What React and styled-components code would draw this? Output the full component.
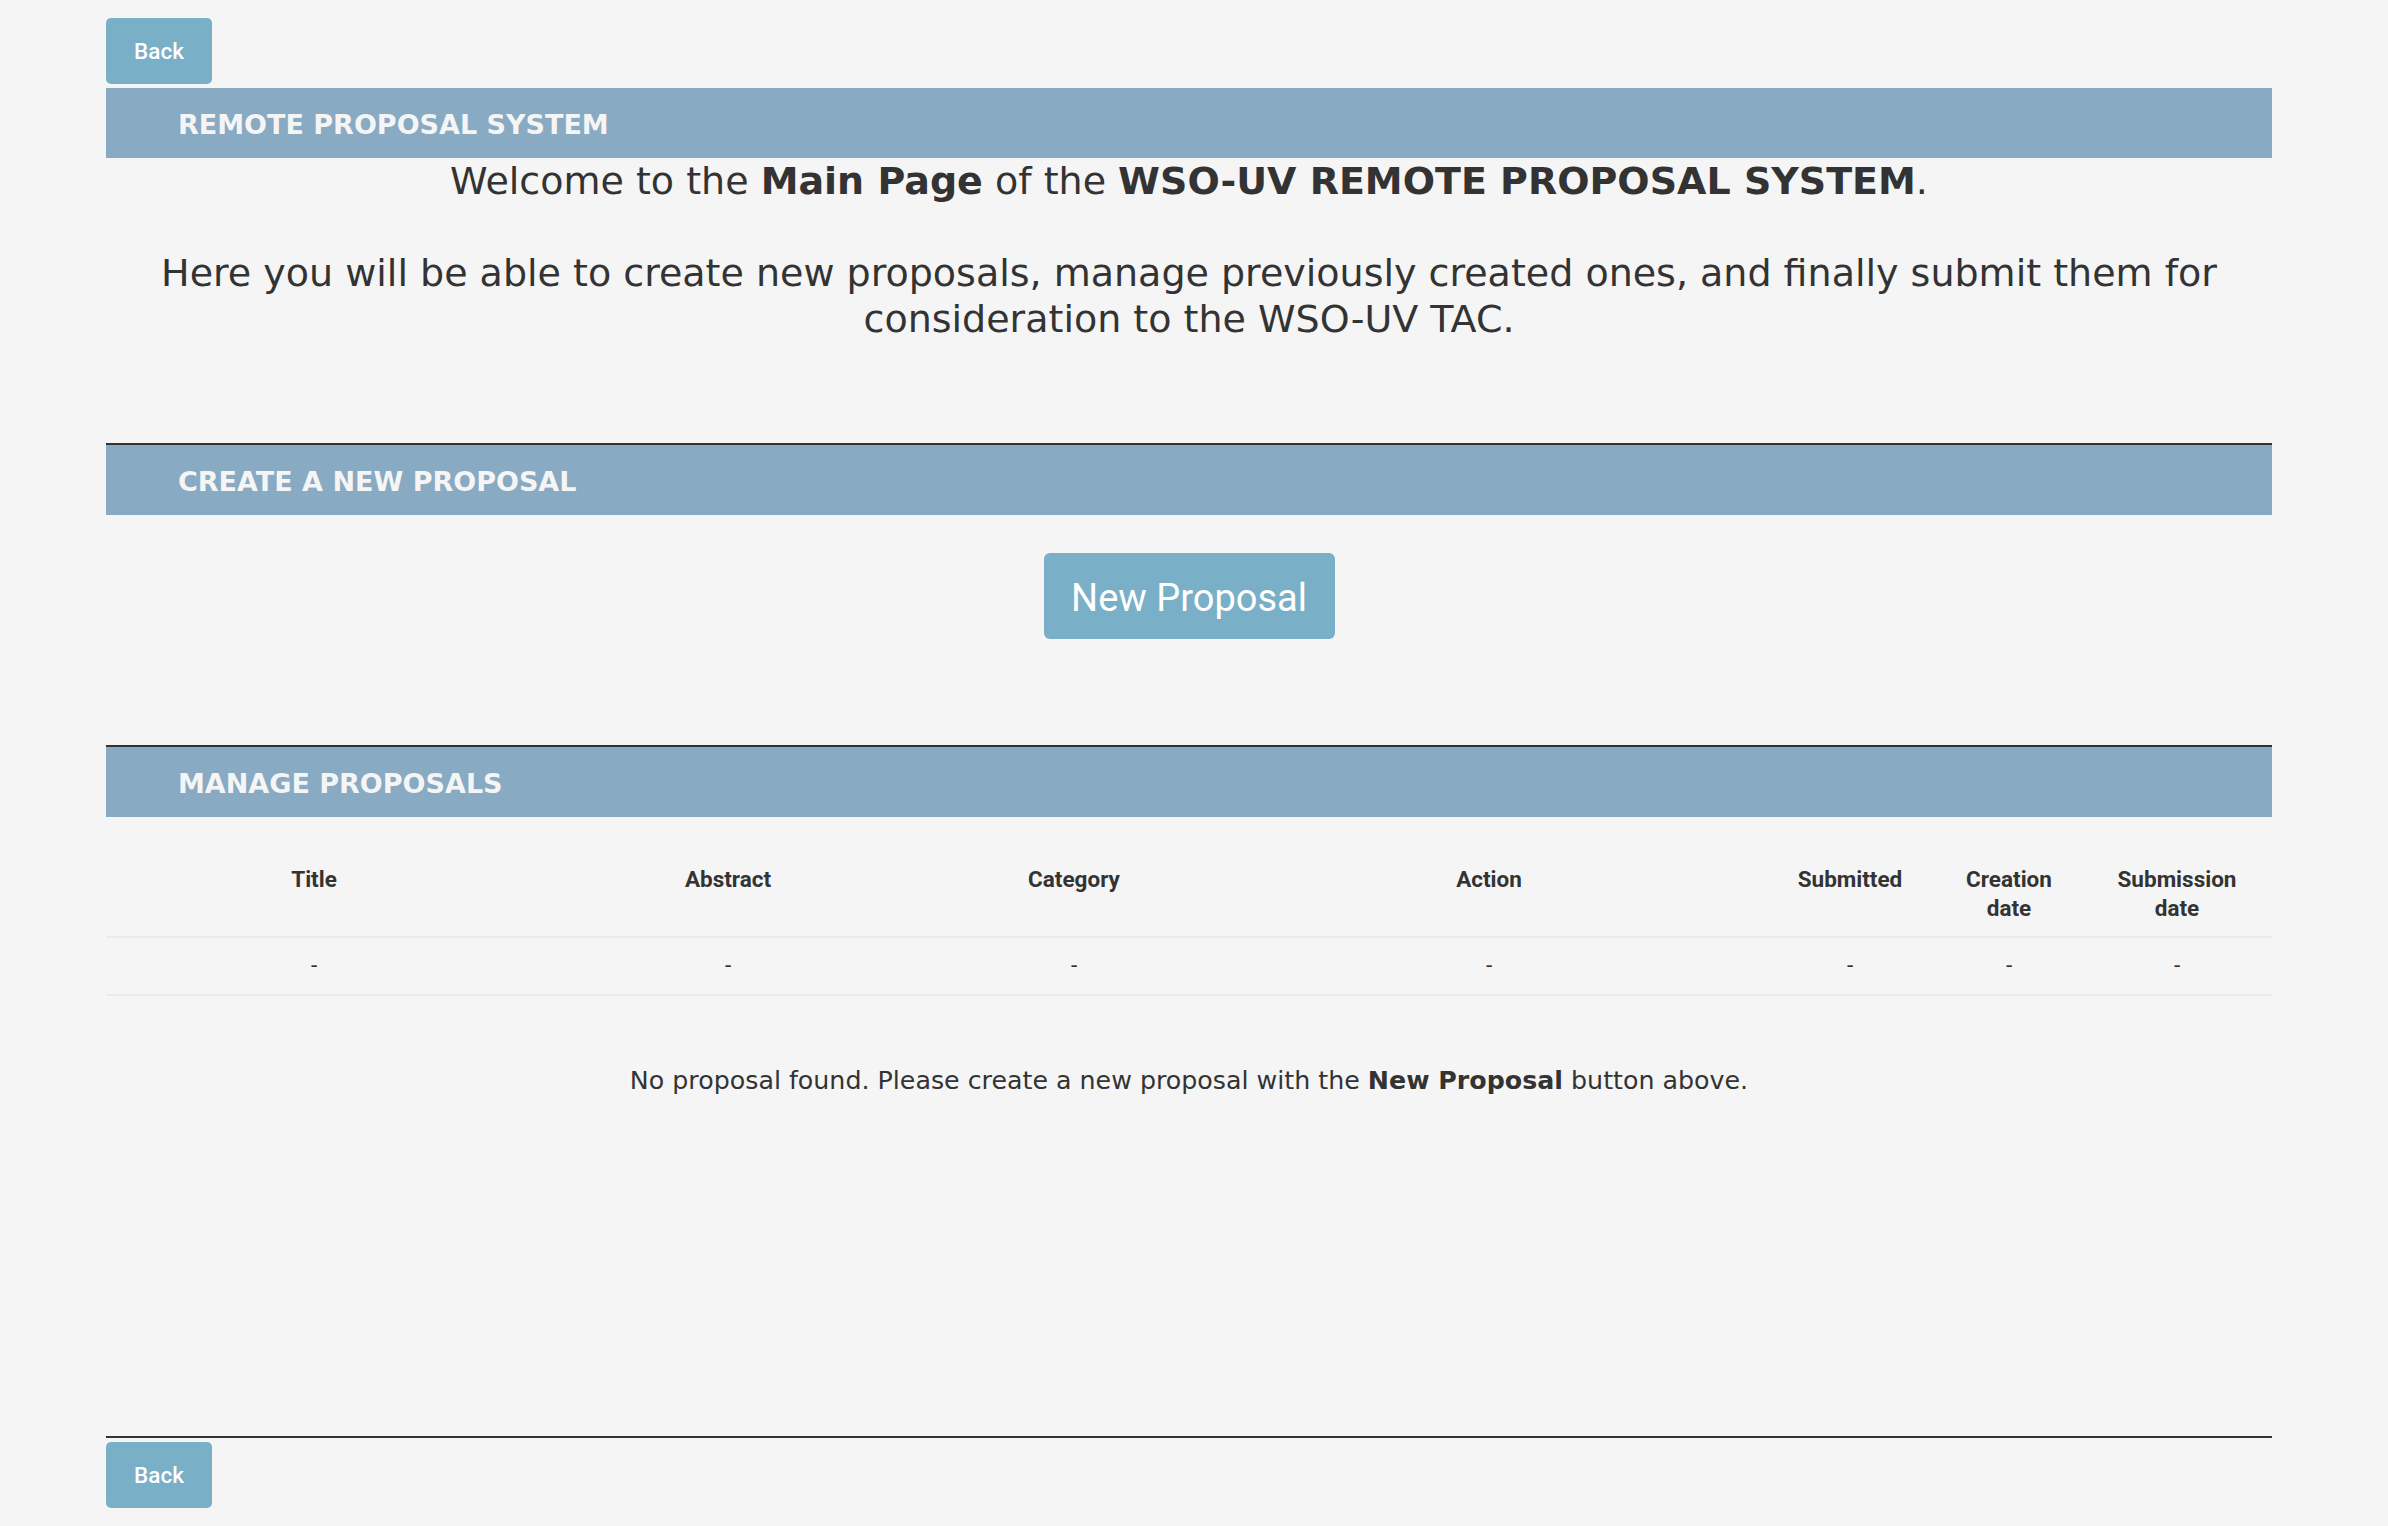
import React from 'react';
import styled, { createGlobalStyle } from 'styled-components';

const GlobalStyle = createGlobalStyle`
  html, body {
    margin: 0;
    padding: 0;
    background: #f5f5f5;
  }
  body {
    font-family: "DejaVu Sans", Verdana, sans-serif;
    color: #333;
  }
`;

const Page = styled.div`
  width: 2166px;
  margin-left: 106px;
  display: flex;
  flex-direction: column;
  min-height: 1526px;
`;

const Button = styled.button`
  background: #7aafc8;
  color: #fff;
  border: none;
  border-radius: ${(p) => (p.$big ? '6px' : '5px')};
  font-family: Roboto, "Liberation Sans", sans-serif;
  font-weight: ${(p) => (p.$big ? 400 : 500)};
  font-size: ${(p) => (p.$big ? '38px' : '22.5px')};
  width: ${(p) => (p.$big ? '291px' : '106px')};
  height: ${(p) => (p.$big ? '86px' : '66px')};
  padding: ${(p) => (p.$big ? '4px 0 0' : '0')};
  cursor: pointer;
`;

const TopBar = styled.div`
  padding-top: 18px;
  margin-bottom: 4px;
  display: flex;
`;

const Band = styled.h2`
  margin: 0;
  height: 70px;
  box-sizing: border-box;
  display: flex;
  align-items: center;
  padding: 3px 0 0 72px;
  background: #89aac3;
  color: #f5f5f5;
  font-family: "DejaVu Sans", Verdana, sans-serif;
  font-weight: 700;
  font-size: 27px;
  border-top: ${(p) => (p.$rule ? '2px solid #333' : 'none')};
  ${(p) => p.$rule && 'height: 72px;'}
`;

const Intro = styled.div`
  text-align: center;
  font-size: 38px;
  line-height: 46px;
  padding: 0 50px;
  margin-bottom: 101px;

  p {
    margin: 0;
  }
  p + p {
    margin-top: 46px;
  }
`;

const Center = styled.div`
  display: flex;
  justify-content: center;
  padding: 38px 0 106px;
`;

const Table = styled.table`
  width: 100%;
  table-layout: fixed;
  border-collapse: collapse;
  margin-top: 36px;
  font-family: Roboto, "Liberation Sans", sans-serif;
  font-size: 22.5px;
  line-height: 29px;
`;

const Th = styled.th`
  font-weight: 700;
  text-align: center;
  vertical-align: top;
  padding: 12px 8px 13px;
  border-bottom: 2px solid #ebebeb;
`;

const Td = styled.td`
  text-align: center;
  padding: 13px 8px 14px;
  border-bottom: 2px solid #ebebeb;
`;

const Empty = styled.p`
  margin: 70px 0 0;
  text-align: center;
  font-size: 25.3px;
  line-height: 30px;
`;

const Footer = styled.div`
  margin-top: auto;
  border-top: 2px solid #333;
  padding: 4px 0 18px;
  display: flex;
`;

const columns = [
  { label: 'Title', width: 416 },
  { label: 'Abstract', width: 412 },
  { label: 'Category', width: 280 },
  { label: 'Action', width: 550 },
  { label: 'Submitted', width: 172 },
  { label: ['Creation', 'date'], width: 146 },
  { label: ['Submission', 'date'], width: 190 },
];

export default function App() {
  return (
    <>
      <GlobalStyle />
      <Page>
        <TopBar>
          <Button>Back</Button>
        </TopBar>

        <Band>REMOTE PROPOSAL SYSTEM</Band>
        <Intro>
          <p>
            Welcome to the <b>Main Page</b> of the <b>WSO-UV REMOTE PROPOSAL SYSTEM</b>.
          </p>
          <p>
            Here you will be able to create new proposals, manage previously created ones, and
            finally submit them for consideration to the WSO-UV TAC.
          </p>
        </Intro>

        <Band $rule>CREATE A NEW PROPOSAL</Band>
        <Center>
          <Button $big>New Proposal</Button>
        </Center>

        <Band $rule>MANAGE PROPOSALS</Band>
        <Table>
          <colgroup>
            {columns.map((c, i) => (
              <col key={i} style={{ width: c.width }} />
            ))}
          </colgroup>
          <thead>
            <tr>
              {columns.map((c, i) => (
                <Th key={i}>
                  {Array.isArray(c.label) ? (
                    <>
                      {c.label[0]}
                      <br />
                      {c.label[1]}
                    </>
                  ) : (
                    c.label
                  )}
                </Th>
              ))}
            </tr>
          </thead>
          <tbody>
            <tr>
              {columns.map((c, i) => (
                <Td key={i}>-</Td>
              ))}
            </tr>
          </tbody>
        </Table>
        <Empty>
          No proposal found. Please create a new proposal with the <b>New Proposal</b> button above.
        </Empty>

        <Footer>
          <Button>Back</Button>
        </Footer>
      </Page>
    </>
  );
}
